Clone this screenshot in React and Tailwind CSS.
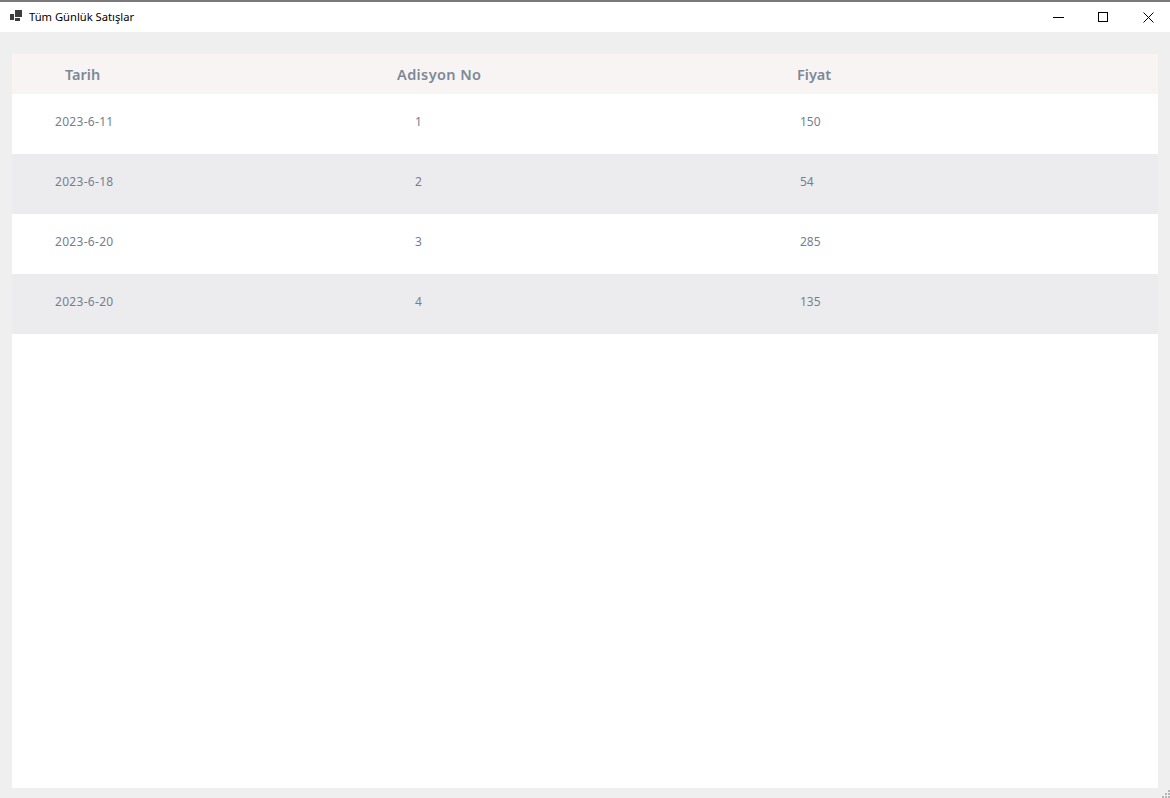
const rows = [
  { date: '2023-6-11', no: 1, price: 150 },
  { date: '2023-6-18', no: 2, price: 54 },
  { date: '2023-6-20', no: 3, price: 285 },
  { date: '2023-6-20', no: 4, price: 135 },
];

export default function App() {
  return (
    <div className="h-[798px] w-[1170px] flex flex-col overflow-hidden bg-[#efefef] relative" style={{ fontFamily: '"Noto Sans", "Open Sans", sans-serif' }}>
      {/* Title bar */}
      <div className="h-8 shrink-0 bg-white border-t-2 border-[#7a7a7a] flex items-center pl-[10px]">
        <svg width="12" height="12" viewBox="0 0 12 12" className="mb-[2px]">
          <rect x="0" y="4" width="4" height="6" fill="#3c3c3c" />
          <rect x="5" y="0" width="7" height="7" fill="#3c3c3c" />
          <rect x="5" y="8" width="5" height="3" fill="#3c3c3c" />
        </svg>
        <span className="ml-[7px] text-[11.2px] text-black">Tüm Günlük Satışlar</span>
        <div className="ml-auto flex items-center">
          <svg width="45" height="30" viewBox="0 0 45 30">
            <path d="M19 15.5h11" stroke="#000" strokeWidth="1" />
          </svg>
          <svg width="46" height="30" viewBox="0 0 46 30">
            <rect x="19.5" y="10.5" width="9" height="9" fill="none" stroke="#000" strokeWidth="1" />
          </svg>
          <svg width="45" height="30" viewBox="0 0 45 30">
            <path d="M18.5 10.5l10 10M28.5 10.5l-10 10" stroke="#000" strokeWidth="1" />
          </svg>
        </div>
      </div>

      {/* Table */}
      <div className="flex-1 pt-[22px] px-3 pb-[10px]">
        <div className="h-full bg-white">
          <div className="h-10 pt-[2px] bg-[#f8f4f3] grid grid-cols-[340px_400px_1fr] items-center text-[14.5px] font-semibold text-[#7d8898]">
            <div className="pl-[53px]">Tarih</div>
            <div className="pl-[45px] tracking-[0.4px]">Adisyon No</div>
            <div className="pl-[45px]">Fiyat</div>
          </div>
          {rows.map((row, index) => (
            <div key={index} className={`h-[60px] pb-[5px] grid grid-cols-[340px_400px_1fr] items-center text-[12px] text-[#75808f] ${index % 2 === 1 ? 'bg-[#ececee]' : 'bg-white'}`}>
              <div className="pl-[43px] tracking-[0.3px]">{row.date}</div>
              <div className="pl-[63px]">{row.no}</div>
              <div className="pl-[48px]">{row.price}</div>
            </div>
          ))}
        </div>
      </div>

      {/* Resize grip */}
      <svg width="8" height="8" viewBox="0 0 8 8" className="absolute right-0 bottom-0">
        <path d="M6 0h2v2H6zM3 3h2v2H3zM6 3h2v2H6zM0 6h2v2H0zM3 6h2v2H3zM6 6h2v2H6z" fill="#b5b5b5" />
      </svg>
    </div>
  );
}
